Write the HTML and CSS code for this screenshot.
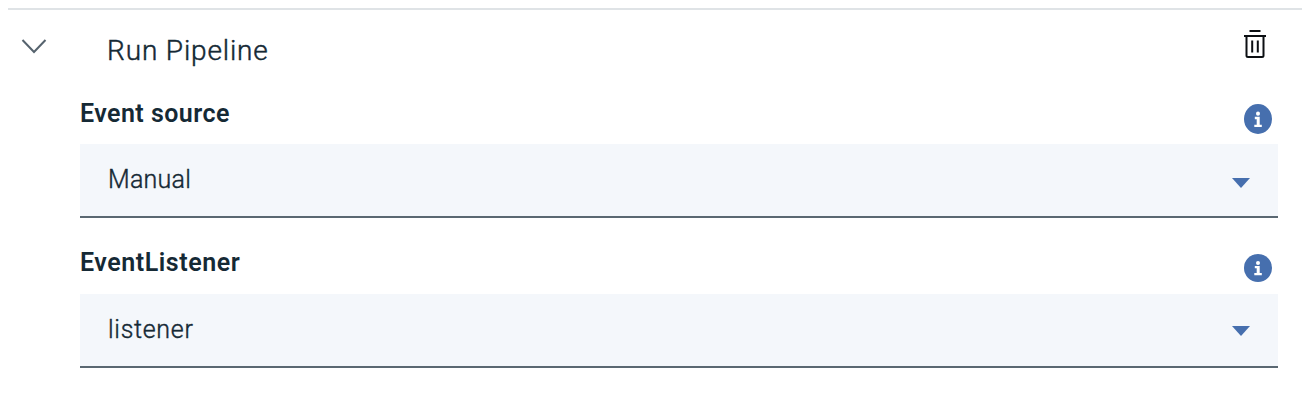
FILE: index.html
```
<!DOCTYPE html>
<html lang="en">
<head>
<meta charset="utf-8">
<title>Run Pipeline</title>
<link rel="stylesheet" href="styles.css">
</head>
<body>
<main class="panel">
  <header class="panel-head">
    <svg class="chevron" width="26" height="18" viewBox="0 0 26 18"><path d="M1.500 2 L13 14 L24.500 2" fill="none" stroke="#56636e" stroke-width="2"/></svg>
    <h1 class="title">Run Pipeline</h1>
    <svg class="trash" width="24" height="30" viewBox="0 0 24 30"><g fill="none" stroke="#0c0f13" stroke-width="2"><path d="M6.500 1H17.500M1 6H23M9.200 10.500V22.500M14.800 10.500V22.500"/><path d="M3 6V25.500Q3 27 4.500 27H18.500Q20 27 20 25.500V6" transform="translate(.5 0)"/></g></svg>
  </header>
  <section class="field">
    <div class="field-head">
      <label class="label label-source">Event source</label>
      <svg class="info" width="28" height="30" viewBox="0 0 28 28" preserveAspectRatio="none"><circle cx="14" cy="14" r="14" fill="#466fae"/><circle cx="14" cy="9" r="2" fill="#fff"/><path d="M10.800 12H15.700V19.300H17.800V21.500H10.300V19.300H12.700V14.200H10.800Z" fill="#fff"/></svg>
    </div>
    <div class="select">
      <span class="value value-manual">Manual</span>
      <svg class="caret caret-low" width="18" height="10" viewBox="0 0 18 10"><path d="M0 0H18L9 10Z" fill="#466fae"/></svg>
    </div>
  </section>
  <section class="field field-second">
    <div class="field-head">
      <label class="label label-listener">EventListener</label>
      <svg class="info" width="28" height="28" viewBox="0 0 28 28"><circle cx="14" cy="14" r="14" fill="#466fae"/><circle cx="14" cy="9" r="2" fill="#fff"/><path d="M10.800 12H15.700V19H17.800V21.200H10.300V19H12.700V14.200H10.800Z" fill="#fff"/></svg>
    </div>
    <div class="select">
      <span class="value value-listener">listener</span>
      <svg class="caret" width="18" height="10" viewBox="0 0 18 10"><path d="M0 0H18L9 10Z" fill="#466fae"/></svg>
    </div>
  </section>
</main>
</body>
</html>
```
FILE: styles.css
```
* { box-sizing: border-box; }
body {
  margin: 0;
  background: #fff;
  color: #152935;
  font-family: Roboto, "Liberation Sans", sans-serif;
}
svg { display: block; flex: none; }
.panel {
  margin: 8px 0 0 8px;
  border-top: 2px solid #dfe3e6;
}
.panel-head {
  display: flex;
  height: 90px;
  padding: 0 35px 0 13px;
}
.chevron { margin-top: 28px; }
.title {
  flex: 1;
  margin: 21px 0 0 60px;
  font-size: 28px;
  font-weight: 300;
  line-height: 40px;
  letter-spacing: 0.86px;
  -webkit-text-stroke: 0.45px #152935;
}
.trash { margin-top: 20px; }
.field { margin: 0 24px 0 72px; }
.field-head {
  display: flex;
  justify-content: space-between;
  height: 44px;
  padding-right: 6px;
}
.label {
  font-size: 25px;
  font-weight: 600;
  line-height: 26px;
}
.label-source {
  padding-top: 1px;
  letter-spacing: 0.45px;
}
.label-listener {
  line-height: 25px;
  letter-spacing: 0.55px;
}
.info { margin-top: 4px; }
.select {
  display: flex;
  justify-content: space-between;
  height: 74px;
  padding: 0 28px;
  background: #f4f7fb;
  border-bottom: 2px solid #5a6872;
}
.value {
  font-size: 25px;
  font-weight: 300;
  line-height: 72px;
  -webkit-text-stroke: 0.4px #152935;
}
.value-manual { letter-spacing: 0.25px; }
.value-listener { letter-spacing: 0.7px; }
.caret { margin-top: 32px; }
.caret-low { margin-top: 34px; }
.field-second { margin-top: 32px; }
```
